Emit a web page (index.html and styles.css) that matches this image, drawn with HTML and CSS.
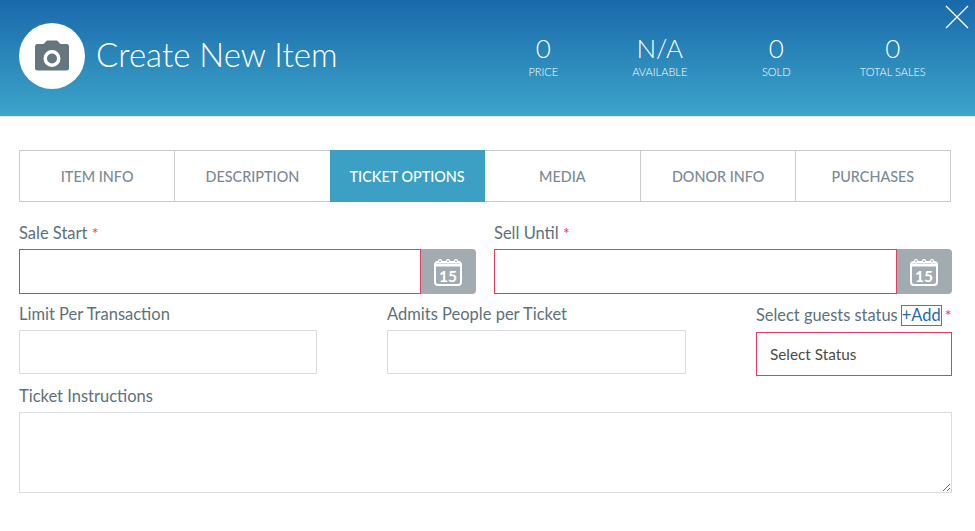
FILE: index.html
```html
<!DOCTYPE html>
<html lang="en">
<head>
<meta charset="utf-8">
<title>Create New Item</title>
<link rel="stylesheet" href="styles.css">
</head>
<body>
<header class="hero">
  <div class="avatar">
    <svg class="camera" width="34" height="31" viewBox="0 0 34 31"><path fill="#66767f" fill-rule="evenodd" d="M2.500 4H8.500L12 .5H22L25.500 4H31.500A2.500 2.500 0 0 1 34 6.500V28A2.500 2.500 0 0 1 31.500 30.500H2.500A2.500 2.500 0 0 1 0 28V6.500A2.500 2.500 0 0 1 2.500 4ZM17 10A8.500 8.500 0 1 0 17 27 8.500 8.500 0 0 0 17 10ZM17 13.500A5 5 0 1 1 17 23.500 5 5 0 0 1 17 13.500Z"/></svg>
  </div>
  <h1 class="title">Create New Item</h1>
  <div class="stats">
    <div class="stat"><div class="stat-value">0</div><div class="stat-label">PRICE</div></div>
    <div class="stat"><div class="stat-value">N/A</div><div class="stat-label">AVAILABLE</div></div>
    <div class="stat"><div class="stat-value">0</div><div class="stat-label">SOLD</div></div>
    <div class="stat"><div class="stat-value">0</div><div class="stat-label">TOTAL SALES</div></div>
  </div>
  <svg class="close" width="24" height="24" viewBox="0 0 24 24"><path d="M1 1 23 23M23 1 1 23" stroke="#fff" stroke-width="1.300" fill="none"/></svg>
</header>
<main class="content">
  <nav class="tabs">
    <div class="tab">ITEM INFO</div>
    <div class="tab">DESCRIPTION</div>
    <div class="tab active">TICKET OPTIONS</div>
    <div class="tab after-active">MEDIA</div>
    <div class="tab">DONOR INFO</div>
    <div class="tab">PURCHASES</div>
  </nav>
  <div class="row dates">
    <div class="field date-field">
      <label class="label">Sale Start <span class="req">*</span></label>
      <div class="date-group">
        <input class="input invalid grow" type="text">
        <span class="addon">
          <svg width="28" height="28" viewBox="0 0 28 28"><rect x="1" y="4" width="26" height="23" rx="3" fill="none" stroke="#fff" stroke-width="2"/><path d="M1 7h26" stroke="#fff" stroke-width="3"/><g fill="#fff"><circle cx="6" cy="3.200" r="2.200"/><circle cx="14" cy="3.200" r="2.200"/><circle cx="22" cy="3.200" r="2.200"/></g><g fill="#a2abb0"><circle cx="6" cy="3.200" r=".9"/><circle cx="14" cy="3.200" r=".9"/><circle cx="22" cy="3.200" r=".9"/></g><text x="14" y="24" class="cal-num">15</text></svg>
        </span>
      </div>
    </div>
    <div class="field date-field">
      <label class="label">Sell Until <span class="req">*</span></label>
      <div class="date-group">
        <input class="input invalid grow" type="text">
        <span class="addon">
          <svg width="28" height="28" viewBox="0 0 28 28"><rect x="1" y="4" width="26" height="23" rx="3" fill="none" stroke="#fff" stroke-width="2"/><path d="M1 7h26" stroke="#fff" stroke-width="3"/><g fill="#fff"><circle cx="6" cy="3.200" r="2.200"/><circle cx="14" cy="3.200" r="2.200"/><circle cx="22" cy="3.200" r="2.200"/></g><g fill="#a2abb0"><circle cx="6" cy="3.200" r=".9"/><circle cx="14" cy="3.200" r=".9"/><circle cx="22" cy="3.200" r=".9"/></g><text x="14" y="24" class="cal-num">15</text></svg>
        </span>
      </div>
    </div>
  </div>
  <div class="row triple">
    <div class="field col-limit">
      <label class="label">Limit Per Transaction</label>
      <input class="input plain" type="text">
    </div>
    <div class="field col-admits">
      <label class="label">Admits People per Ticket</label>
      <input class="input plain" type="text">
    </div>
    <div class="field col-status">
      <label class="label status-label">Select guests status <a class="add">+Add</a> <span class="req">*</span></label>
      <div class="select">Select Status</div>
    </div>
  </div>
  <div class="field instructions">
    <label class="label">Ticket Instructions</label>
    <textarea class="textarea"></textarea>
  </div>
</main>
</body>
</html>
```

FILE: styles.css
```css
* { box-sizing: border-box; }
html, body { margin: 0; padding: 0; background: #fff; overflow: hidden; }
body { font-family: Lato, "Liberation Sans", sans-serif; color: #5d717d; height: 531px; }

.hero {
  position: relative;
  height: 117px;
  display: flex;
  align-items: flex-start;
  padding: 23px 24px 0 19px;
  background: linear-gradient(180deg, #1a69ab 0%, #3ca5c9 100%);
  border-bottom: 1px solid #e4e6e7;
}
.avatar {
  width: 66px;
  height: 66px;
  flex: none;
  border-radius: 50%;
  background: #fff;
  display: flex;
  align-items: center;
  justify-content: center;
  padding-bottom: 2px;
}
.title {
  margin: 10px 0 0 11px;
  font-size: 33px;
  line-height: 42px;
  font-weight: 300;
  color: #fff;
  white-space: nowrap;
  width: 389px;
  flex: none;
}
.stats { display: flex; width: 466px; flex: none; margin-top: 9px; }
.stat { flex: 1 1 0; text-align: center; color: #fff; }
.stat-value { font-size: 26px; line-height: 33px; font-weight: 300; }
.stat-label { font-size: 11px; line-height: 14px; font-weight: 300; }
.close { position: absolute; top: 5px; right: 6px; }

.content { padding: 33px 23px 0 19px; }
.tabs { display: flex; width: 932px; height: 52px; }
.tab {
  flex: none;
  width: 155.250px;
  display: flex;
  align-items: center;
  justify-content: center;
  font-size: 14.400px;
  font-weight: 500;
  color: #7c8a93;
  border: 1px solid #c9cbcc;
  border-right: 0;
}
.tab:last-child { border-right: 1px solid #c9cbcc; }
.tab.active { background: #3ca0c4; color: #fff; border: 0; }
.tab.after-active { border-left: 0; }

.row { display: flex; }
.field { display: flex; flex-direction: column; }
.label { font-size: 16.500px; line-height: 20px; font-weight: 400; color: #5d717d; height: 20px; white-space: nowrap; }
.req { color: #e6395f; font-size: 16px; }

.dates { gap: 18px; margin-top: 21px; }
.date-field { width: 457px; }
.date-field:last-child { width: 458px; }
.date-group { display: flex; height: 45px; margin-top: 6px; }
.input { display: block; height: 44px; background: #fff; outline: none; border-radius: 0; padding: 0 12px; }
.grow { flex: 1 1 auto; min-width: 0; height: 45px; }
.invalid { border: 1px solid #e23d63; }
.plain { border: 1px solid #d8dcde; margin-top: 6px; width: 100%; }
.addon {
  width: 55px;
  flex: none;
  display: flex;
  align-items: center;
  justify-content: center;
  background: #a2abb0;
  border-radius: 0 4px 4px 0;
  padding-right: 2px;
}
.cal-num { font-family: Lato, "Liberation Sans", sans-serif; font-size: 15.500px; font-weight: 700; fill: #fff; text-anchor: middle; }

.triple { margin-top: 10px; gap: 70px; }
.col-limit { width: 298px; }
.col-admits { width: 299px; }
.col-status { width: 196px; }
.status-label { margin-top: 1px; font-size: 16.400px; }
.add { color: #1f69ad; border: 1px solid #e23d63; display: inline-block; line-height: 18px; height: 21px; margin: 0 -1px; }
.select {
  height: 44px;
  margin-top: 7px;
  border: 1px solid #e23d63;
  padding: 0 13px;
  display: flex;
  align-items: center;
  font-size: 15.300px;
  color: #4a4a4a;
  background: #fff;
}
.instructions { margin-top: 10px; }
.textarea {
  display: block;
  width: 933px;
  height: 81px;
  margin-top: 6px;
  border: 1px solid #d8dcde;
  background: #fff;
  outline: none;
  border-radius: 0;
}
```
